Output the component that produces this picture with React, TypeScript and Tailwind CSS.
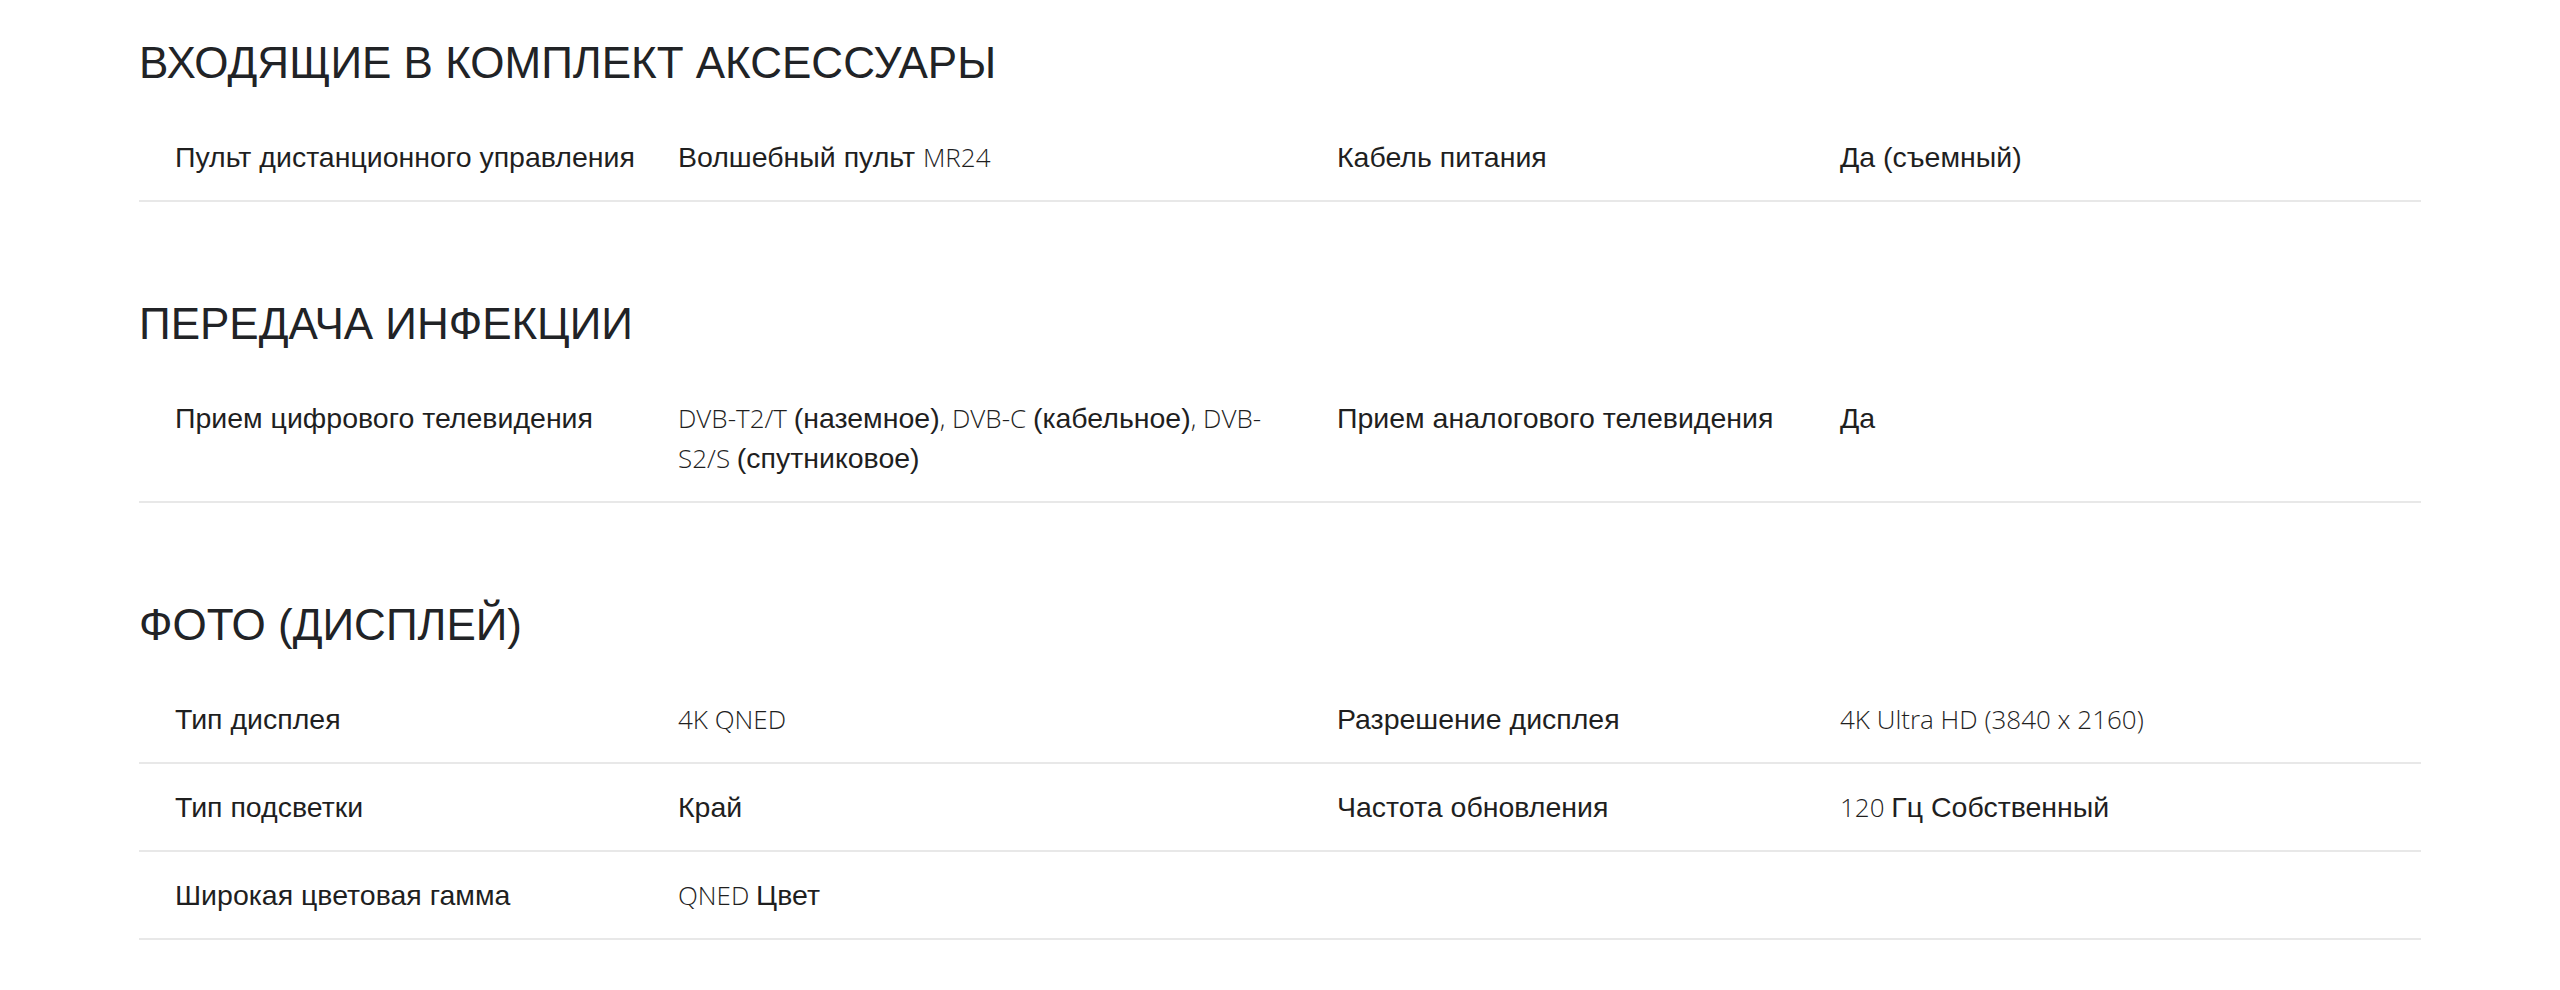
import React from "react";

type Part = { t: string; lat?: boolean };
type Cell = { label: string; value: Part[] };

const L = (t: string): Part => ({ t, lat: true });
const C = (t: string): Part => ({ t });

function Value({ parts }: { parts: Part[] }) {
  return (
    <>
      {parts.map((p, i) =>
        p.lat ? (
          <span key={i} className="font-['Open_Sans',sans-serif] font-light text-[#1f1f1f] text-[26px]">
            {p.t}
          </span>
        ) : (
          <span key={i}>{p.t}</span>
        )
      )}
    </>
  );
}

function Row({ cells }: { cells: (Cell | null)[] }) {
  const [a, b] = cells;
  return (
    <div className="flex border-b-2 border-[#e8e8e8] px-[36px] py-[23px] text-[28.5px] leading-[40px] text-[#1f1f1f]">
      <div className="w-[503px] shrink-0 pr-[20px]">{a?.label}</div>
      <div className="w-[659px] shrink-0 pr-[40px]">{a && <Value parts={a.value} />}</div>
      <div className="w-[503px] shrink-0 pr-[20px]">{b?.label}</div>
      <div className="flex-1">{b && <Value parts={b.value} />}</div>
    </div>
  );
}

function Section({ title, rows, first }: { title: string; rows: (Cell | null)[][]; first?: boolean }) {
  return (
    <section className={first ? "pt-[37px]" : "pt-[96px]"}>
      <h2 className="text-[44px] leading-[52px] text-[#212326] mb-[25px]">{title}</h2>
      {rows.map((r, i) => (
        <Row key={i} cells={r} />
      ))}
    </section>
  );
}

export default function App() {
  return (
    <div className="min-h-[990px] bg-white font-['Liberation_Sans',Arial,sans-serif]">
      <div className="mx-auto w-[2282px]">
        <Section
          first
          title="ВХОДЯЩИЕ В КОМПЛЕКТ АКСЕССУАРЫ"
          rows={[
            [
              { label: "Пульт дистанционного управления", value: [C("Волшебный пульт "), L("MR24")] },
              { label: "Кабель питания", value: [C("Да (съемный)")] },
            ],
          ]}
        />
        <Section
          title="ПЕРЕДАЧА ИНФЕКЦИИ"
          rows={[
            [
              {
                label: "Прием цифрового телевидения",
                value: [
                  L("DVB-T2/T "),
                  C("(наземное)"),
                  L(", DVB-C "),
                  C("(кабельное)"),
                  L(", DVB-"),
                  L("S2/S "),
                  C("(спутниковое)"),
                ],
              },
              { label: "Прием аналогового телевидения", value: [C("Да")] },
            ],
          ]}
        />
        <Section
          title="ФОТО (ДИСПЛЕЙ)"
          rows={[
            [
              { label: "Тип дисплея", value: [L("4K QNED")] },
              { label: "Разрешение дисплея", value: [L("4K Ultra HD (3840 x 2160)")] },
            ],
            [
              { label: "Тип подсветки", value: [C("Край")] },
              { label: "Частота обновления", value: [L("120 "), C("Гц Собственный")] },
            ],
            [{ label: "Широкая цветовая гамма", value: [L("QNED "), C("Цвет")] }, null],
          ]}
        />
      </div>
    </div>
  );
}
